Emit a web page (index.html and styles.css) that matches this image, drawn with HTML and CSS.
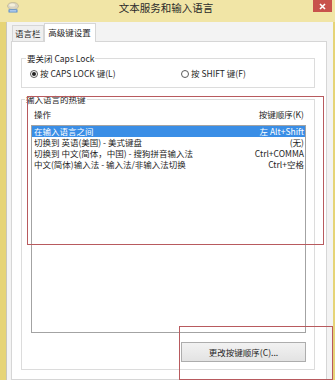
FILE: index.html
```html
<!DOCTYPE html>
<html lang="zh-CN">
<head>
  <meta charset="UTF-8">
  <title>文本服务和输入语言</title>
  <link rel="stylesheet" href="styles.css">
</head>
<body>
  <div class="window">
    <!-- Title bar -->
    <div class="titlebar">
      <svg class="app-icon" width="12" height="11" viewBox="0 0 12 11">
        <ellipse cx="6" cy="4" rx="5.5" ry="3.6" fill="#d9d4c2" stroke="#b7ae8e" stroke-width="0.6"/>
        <ellipse cx="5.2" cy="3" rx="3" ry="1.6" fill="#f4efd9"/>
        <rect x="1.5" y="7.2" width="9" height="3.3" rx="0.6" fill="#5b8fcf"/>
        <rect x="2.6" y="8.1" width="6.8" height="0.7" fill="#cfe0f5"/>
        <rect x="2.6" y="9.3" width="6.8" height="0.5" fill="#cfe0f5"/>
      </svg>
      <div class="title">文本服务和输入语言</div>
      <div class="close">
        <svg width="7" height="7" viewBox="0 0 7 7">
          <path d="M1 1 L6 6 M6 1 L1 6" stroke="#fff" stroke-width="1.6"/>
        </svg>
      </div>
    </div>

    <div class="client">
      <!-- Tabs -->
      <div class="tabs">
        <div class="tab">语言栏</div>
        <div class="tab active">高级键设置</div>
      </div>

      <div class="tab-panel">
        <fieldset class="group caps">
          <legend>要关闭 Caps Lock</legend>
          <div class="radios">
            <label class="radio-item"><span class="radio checked"></span>按 CAPS LOCK 键(L)</label>
            <label class="radio-item"><span class="radio"></span>按 SHIFT 键(F)</label>
          </div>
        </fieldset>

        <fieldset class="group hotkeys">
          <legend>输入语言的热键</legend>
          <div class="list-head">
            <span>操作</span>
            <span>按键顺序(K)</span>
          </div>
          <div class="list">
            <div class="row selected"><span>在输入语言之间</span><span>左 Alt+Shift</span></div>
            <div class="row"><span>切换到 英语(美国) - 美式键盘</span><span>(无)</span></div>
            <div class="row"><span>切换到 中文(简体，中国) - 搜狗拼音输入法</span><span>Ctrl+COMMA</span></div>
            <div class="row"><span>中文(简体)输入法 - 输入法/非输入法切换</span><span>Ctrl+空格</span></div>
          </div>
          <div class="actions">
            <button class="btn">更改按键顺序(C)...</button>
          </div>
        </fieldset>
      </div>
    </div>

    <!-- Red highlight marks drawn over the dialog -->
    <div class="mark mark-list"></div>
    <div class="mark mark-button"></div>
  </div>
</body>
</html>
```

FILE: styles.css
```css
html, body {
  margin: 0;
  padding: 0;
}
body {
  width: 335px;
  height: 380px;
  overflow: hidden;
  font-family: "Noto Sans CJK SC", "Noto Sans", sans-serif;
  font-size: 8.5px;
  line-height: 11px;
  color: #1e1e1e;
}
.window {
  position: relative;
  width: 335px;
  height: 380px;
  display: flex;
  flex-direction: column;
  background: #e6d476;
  box-sizing: border-box;
}
.titlebar {
  height: 22px;
  display: flex;
  align-items: flex-start;
  background: #f1e5a6;
  flex-shrink: 0;
}
.app-icon {
  margin: 2px 0 0 7px;
}
.title {
  flex: 1;
  text-align: center;
  font-size: 10.5px;
  line-height: 12px;
  padding-top: 2px;
  color: #2a2a2a;
}
.close {
  width: 19px;
  height: 12px;
  margin-right: 3px;
  background: #c8524c;
  display: flex;
  align-items: center;
  justify-content: center;
}
.client {
  flex: 1;
  margin: 0 2px 0 6px;
  border-left: 1px solid #c9c6b6;
  background: #f3f3f3;
  padding: 1px 6px 0 4px;
  display: flex;
  flex-direction: column;
  min-height: 0;
}
.tabs {
  display: flex;
  align-items: flex-end;
  height: 18px;
  padding-left: 1px;
}
.tab {
  height: 16px;
  padding: 0 2px;
  white-space: nowrap;
  box-sizing: border-box;
  border: 1px solid #d6d6d6;
  border-bottom: none;
  background: #efefef;
  text-align: center;
  line-height: 15px;
}
.tab.active {
  position: relative;
  z-index: 1;
  width: 52px;
  height: 19px;
  margin-bottom: -1px;
  background: #fff;
  line-height: 16px;
}
.tab-panel {
  flex: 1;
  background: #fff;
  border: 1px solid #d6d6d6;
  padding: 11px 11px 0 9px;
}
.group {
  margin: 0;
  border: 1px solid #dcdcdc;
  padding: 4px 8px 8px 8px;
  min-width: 0;
}
.group legend {
  padding: 0 1px;
  margin-left: -4px;
  line-height: 11px;
}
.radios {
  display: grid;
  grid-template-columns: 151px 1fr;
}
.radio-item {
  display: flex;
  align-items: center;
  gap: 2px;
}
.radio {
  width: 8px;
  height: 8px;
  border: 1px solid #5a5a5a;
  border-radius: 50%;
  box-sizing: border-box;
  display: flex;
  align-items: center;
  justify-content: center;
  background: #fff;
}
.radio.checked::after {
  content: "";
  width: 4px;
  height: 4px;
  border-radius: 50%;
  background: #222;
}
.hotkeys {
  margin-top: 6px;
  padding: 4px 8px 7px 9px;
}
.hotkeys legend {
  margin-left: -6px;
}
.list-head {
  display: flex;
  justify-content: space-between;
  padding: 0 2px 0 3px;
  height: 11px;
}
.list {
  margin-top: 5px;
  height: 208px;
  box-sizing: border-box;
  border: 1px solid #a3a3a3;
  background: #fff;
}
.row {
  display: flex;
  justify-content: space-between;
  height: 11px;
  padding: 0 1px 0 2px;
  white-space: nowrap;
}
.row.selected {
  background: #3a8ee6;
  color: #fff;
}
.actions {
  display: flex;
  justify-content: flex-end;
  margin-top: 9px;
}
.btn {
  width: 125px;
  height: 20px;
  padding: 0;
  font-family: inherit;
  font-size: 8.5px;
  color: #1e1e1e;
  border: 1px solid #adadad;
  background: linear-gradient(#f2f2f2, #e3e3e3);
}
.mark {
  position: absolute;
  border: 1px solid #b85a5e;
  box-sizing: border-box;
}
.mark-list {
  left: 27px;
  top: 96px;
  width: 297px;
  height: 149px;
}
.mark-button {
  left: 179px;
  top: 326px;
  width: 154px;
  height: 54px;
}
```
